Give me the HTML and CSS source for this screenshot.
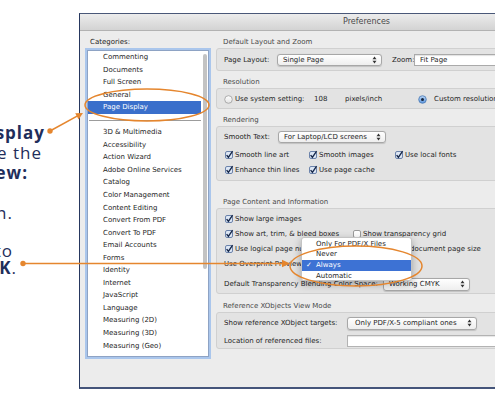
FILE: index.html
```
<!DOCTYPE html>
<html>
<head>
<meta charset="utf-8">
<title>Preferences</title>
<link rel="stylesheet" href="styles.css">
</head>
<body>
<div class="stage">
  <div class="notes">
    <div class="nl l1"><b>Page Display</b></div>
    <div class="nl l2">change the</div>
    <div class="nl l3"><b>Preview:</b></div>
    <div class="nl l4">section.</div>
    <div class="nl l5">to</div>
    <div class="nl l6"><b>CMYK</b>.</div>
  </div>

  <div class="window">
    <div class="titlebar">Preferences</div>
    <div class="content">
      <div class="left">
        <div class="cat-label">Categories:</div>
        <div class="list">
          <div class="items">
            <div class="item">Commenting</div>
            <div class="item">Documents</div>
            <div class="item">Full Screen</div>
            <div class="item">General</div>
            <div class="item on">Page Display</div>
            <div class="sep"><i></i></div>
            <div class="item">3D &amp; Multimedia</div>
            <div class="item">Accessibility</div>
            <div class="item">Action Wizard</div>
            <div class="item">Adobe Online Services</div>
            <div class="item">Catalog</div>
            <div class="item">Color Management</div>
            <div class="item">Content Editing</div>
            <div class="item">Convert From PDF</div>
            <div class="item">Convert To PDF</div>
            <div class="item">Email Accounts</div>
            <div class="item">Forms</div>
            <div class="item">Identity</div>
            <div class="item">Internet</div>
            <div class="item">JavaScript</div>
            <div class="item">Language</div>
            <div class="item">Measuring (2D)</div>
            <div class="item">Measuring (3D)</div>
            <div class="item">Measuring (Geo)</div>
          </div>
          <div class="track"><div class="thumb"></div></div>
        </div>
      </div>

      <div class="right">
        <div class="sec-label">Default Layout and Zoom</div>
        <div class="group g1">
          <div class="row r13">
            <span class="cell w53">Page Layout:</span>
            <span class="popup w105"><span>Single Page</span><svg class="arr" width="5" height="8" viewBox="0 0 5 8"><polygon points="0.5,3.2 2.5,0.6 4.5,3.2"/><polygon points="0.5,4.8 2.5,7.4 4.5,4.8"/></svg></span>
            <span class="cell zoomlbl">Zoom:</span>
            <span class="combo">Fit Page</span>
          </div>
        </div>

        <div class="sec-label mt6">Resolution</div>
        <div class="group g2">
          <div class="row r12">
            <svg class="radio" width="9" height="9" viewBox="0 0 9 9"><defs><linearGradient id="rg" x1="0" y1="0" x2="0" y2="1"><stop offset="0" stop-color="#ffffff"/><stop offset="1" stop-color="#e4e4e4"/></linearGradient></defs><circle cx="4.5" cy="4.5" r="3.8" fill="url(#rg)" stroke="#9a9a9a" stroke-width="0.8"/></svg>
            <span class="cell w79">Use system setting:</span>
            <span class="cell w31">108</span>
            <span class="cell w73">pixels/inch</span>
            <svg class="radio" width="9" height="9" viewBox="0 0 9 9"><defs><linearGradient id="rb" x1="0" y1="0" x2="0" y2="1"><stop offset="0" stop-color="#b9d4f4"/><stop offset="1" stop-color="#5d97de"/></linearGradient></defs><circle cx="4.5" cy="4.5" r="3.8" fill="url(#rb)" stroke="#4a78b4" stroke-width="0.8"/><circle cx="4.5" cy="4.5" r="1.5" fill="#16243c"/></svg>
            <span class="cell gap5">Custom resolution</span>
          </div>
        </div>

        <div class="sec-label mt6">Rendering</div>
        <div class="group g3">
          <div class="row r12">
            <span class="cell w54">Smooth Text:</span>
            <span class="popup w108"><span>For Laptop/LCD screens</span><svg class="arr" width="5" height="8" viewBox="0 0 5 8"><polygon points="0.5,3.2 2.5,0.6 4.5,3.2"/><polygon points="0.5,4.8 2.5,7.4 4.5,4.8"/></svg></span>
          </div>
          <div class="row r15 mt45">
            <span class="check c84"><svg class="cb" width="8" height="8" viewBox="0 0 8 8"><rect x="0.5" y="0.5" width="7" height="7" rx="1.5" fill="#dde7f5" stroke="#6c83ab"/><path d="M1.6 4.1 L3.4 6.3 L7.6 0.2" fill="none" stroke="#17284a" stroke-width="1.4"/></svg>Smooth line art</span>
            <span class="check c86"><svg class="cb" width="8" height="8" viewBox="0 0 8 8"><rect x="0.5" y="0.5" width="7" height="7" rx="1.5" fill="#dde7f5" stroke="#6c83ab"/><path d="M1.6 4.1 L3.4 6.3 L7.6 0.2" fill="none" stroke="#17284a" stroke-width="1.4"/></svg>Smooth images</span>
            <span class="check"><svg class="cb" width="8" height="8" viewBox="0 0 8 8"><rect x="0.5" y="0.5" width="7" height="7" rx="1.5" fill="#dde7f5" stroke="#6c83ab"/><path d="M1.6 4.1 L3.4 6.3 L7.6 0.2" fill="none" stroke="#17284a" stroke-width="1.4"/></svg>Use local fonts</span>
          </div>
          <div class="row r15">
            <span class="check c84"><svg class="cb" width="8" height="8" viewBox="0 0 8 8"><rect x="0.5" y="0.5" width="7" height="7" rx="1.5" fill="#dde7f5" stroke="#6c83ab"/><path d="M1.6 4.1 L3.4 6.3 L7.6 0.2" fill="none" stroke="#17284a" stroke-width="1.4"/></svg>Enhance thin lines</span>
            <span class="check c86"><svg class="cb" width="8" height="8" viewBox="0 0 8 8"><rect x="0.5" y="0.5" width="7" height="7" rx="1.5" fill="#dde7f5" stroke="#6c83ab"/><path d="M1.6 4.1 L3.4 6.3 L7.6 0.2" fill="none" stroke="#17284a" stroke-width="1.4"/></svg>Use page cache</span>
          </div>
        </div>

        <div class="sec-label mt16">Page Content and Information</div>
        <div class="group g4">
          <div class="row r15">
            <span class="check"><svg class="cb" width="8" height="8" viewBox="0 0 8 8"><rect x="0.5" y="0.5" width="7" height="7" rx="1.5" fill="#dde7f5" stroke="#6c83ab"/><path d="M1.6 4.1 L3.4 6.3 L7.6 0.2" fill="none" stroke="#17284a" stroke-width="1.4"/></svg>Show large images</span>
          </div>
          <div class="row r15">
            <span class="check c128"><svg class="cb" width="8" height="8" viewBox="0 0 8 8"><rect x="0.5" y="0.5" width="7" height="7" rx="1.5" fill="#dde7f5" stroke="#6c83ab"/><path d="M1.6 4.1 L3.4 6.3 L7.6 0.2" fill="none" stroke="#17284a" stroke-width="1.4"/></svg>Show art, trim, &amp; bleed boxes</span>
            <span class="check"><svg class="cb" width="8" height="8" viewBox="0 0 8 8"><rect x="0.5" y="0.5" width="7" height="7" rx="1.5" fill="#ffffff" stroke="#9b9b9b"/></svg>Show transparency grid</span>
          </div>
          <div class="row r15">
            <span class="check c128"><svg class="cb" width="8" height="8" viewBox="0 0 8 8"><rect x="0.5" y="0.5" width="7" height="7" rx="1.5" fill="#dde7f5" stroke="#6c83ab"/><path d="M1.6 4.1 L3.4 6.3 L7.6 0.2" fill="none" stroke="#17284a" stroke-width="1.4"/></svg>Use logical page numbers</span>
            <span class="check"><svg class="cb" width="8" height="8" viewBox="0 0 8 8"><rect x="0.5" y="0.5" width="7" height="7" rx="1.5" fill="#ffffff" stroke="#9b9b9b"/></svg>Always show document page size</span>
          </div>
          <div class="row r15">
            <span class="cell w79">Use Overprint Preview:</span>
            <span class="popup w100"><span>Always</span><svg class="arr" width="5" height="8" viewBox="0 0 5 8"><polygon points="0.5,3.2 2.5,0.6 4.5,3.2"/><polygon points="0.5,4.8 2.5,7.4 4.5,4.8"/></svg></span>
          </div>
          <div class="row r15 mt5">
            <span class="cell w159">Default Transparency Blending Color Space:</span>
            <span class="popup w87 h13"><span>Working CMYK</span><svg class="arr" width="5" height="8" viewBox="0 0 5 8"><polygon points="0.5,3.2 2.5,0.6 4.5,3.2"/><polygon points="0.5,4.8 2.5,7.4 4.5,4.8"/></svg></span>
          </div>
        </div>

        <div class="sec-label mt7">Reference XObjects View Mode</div>
        <div class="group g5">
          <div class="row r15">
            <span class="cell w123">Show reference XObject targets:</span>
            <span class="popup w130 h13 pl7"><span>Only PDF/X-5 compliant ones</span><svg class="arr" width="5" height="8" viewBox="0 0 5 8"><polygon points="0.5,3.2 2.5,0.6 4.5,3.2"/><polygon points="0.5,4.8 2.5,7.4 4.5,4.8"/></svg></span>
          </div>
          <div class="row r15 mt3">
            <span class="cell w123">Location of referenced files:</span>
            <span class="field"></span>
          </div>
        </div>
      </div>
    </div>

    <div class="menu">
      <div class="mi"><span class="mark"></span>Only For PDF/X Files</div>
      <div class="mi"><span class="mark"></span>Never</div>
      <div class="mi hi"><span class="mark">✓</span>Always</div>
      <div class="mi"><span class="mark"></span>Automatic</div>
    </div>
  </div>
</div>

<svg class="marks" width="495" height="400" viewBox="0 0 495 400">
  <g fill="none" stroke="#e5862e" stroke-width="1.5">
    <ellipse cx="147" cy="105" rx="62" ry="16"/>
    <ellipse cx="356" cy="266" rx="66" ry="20"/>
    <line x1="50" y1="131" x2="78" y2="115.7"/>
    <line x1="23" y1="263.5" x2="283" y2="263.5"/>
  </g>
  <g fill="#e5862e">
    <circle cx="50" cy="131" r="2.7"/>
    <polygon points="83,113 78.6,119.5 75.2,113.3"/>
    <circle cx="23" cy="263.5" r="2.7"/>
    <polygon points="290,263.5 282,259.8 282,267.2"/>
  </g>
</svg>
</body>
</html>
```

FILE: styles.css
```
* { box-sizing: border-box; margin: 0; padding: 0; }
html, body { width: 495px; height: 400px; overflow: hidden; background: #ffffff; }
body { position: relative; font-family: "DejaVu Sans", sans-serif; font-size: 7px; color: #1e1e1e; }

.stage { display: flex; padding-top: 13px; height: 400px; }

/* left annotation text */
.notes { width: 79px; flex-shrink: 0; padding-top: 110px; font-family: "Open Sans", sans-serif; font-size: 17px; letter-spacing: 1px; color: #1f2e5b; }
.nl { display: flex; justify-content: flex-end; overflow: hidden; white-space: nowrap; height: 20px; line-height: 20px; }
.nl b { font-weight: 700; }
.l1 { padding-right: 34px; }
.l2 { padding-right: 37px; }
.l3 { padding-right: 51px; }
.l4 { padding-right: 66px; margin-top: 20px; }
.l5 { padding-right: 66px; margin-top: 18.5px; height: 17px; line-height: 17px; }
.l6 { padding-right: 62px; height: 17px; line-height: 17px; }

/* window */
.window { width: 600px; height: 376px; flex-shrink: 0; position: relative; background: #ececec;
  border-top: 1px solid #4a5878; border-left: 1px solid #26375e; border-bottom: 2px solid #44547a;
  display: flex; flex-direction: column; }
.titlebar { height: 17px; flex-shrink: 0; background: linear-gradient(#ececec, #d3d3d3); border-bottom: 1px solid #b2b2b2;
  text-align: center; font-size: 8px; line-height: 16px; color: #4a4a4a; padding-right: 26px; }
.content { display: flex; flex: 1; }

/* categories */
.left { width: 134px; flex-shrink: 0; padding-top: 6px; }
.cat-label { height: 10px; line-height: 10px; padding-left: 10px; }
.list { margin: 3px 0 0 7px; width: 122px; height: 307px; background: #ffffff; border: 1px solid #8ea3c4;
  box-shadow: 0 0 0 2px #aac6ec; display: flex; }
.items { flex: 1; }
.item { height: 12.55px; line-height: 12.55px; padding-left: 15px; white-space: nowrap; }
.item.on { background: #3a6fcb; color: #ffffff; }
.sep { height: 12.55px; display: flex; align-items: center; padding-left: 1px; }
.sep i { flex: 1; height: 1px; background: #9c9c9c; }
.track { width: 7px; padding: 3px 1px 0 2px; }
.thumb { width: 4px; height: 215px; background: #c3c3c3; border-radius: 2px; }

/* right pane */
.right { flex: 1; padding: 6px 0 0 2px; }
.sec-label { height: 10px; line-height: 10px; padding-left: 7px; color: #4a4a4a; }
.mt6 { margin-top: 6px; }
.mt7 { margin-top: 7px; }
.mt16 { margin-top: 16px; }
.group { margin-top: 1px; background: #e3e3e3; border: 1px solid #d0d0d0; border-radius: 3px; padding-left: 7px; }
.g1 { height: 23px; padding-top: 4px; }
.g2 { height: 21px; padding-top: 4px; }
.g3 { height: 55px; padding-top: 4px; }
.g4 { height: 86px; padding-top: 2.5px; }
.g5 { height: 37px; padding-top: 2.5px; }

.row { display: flex; align-items: center; white-space: nowrap; }
.r12 { height: 12px; }
.r13 { height: 13px; }
.r15 { height: 15px; }
.mt45 { margin-top: 4.5px; }
.mt5 { margin-top: 5px; }
.mt3 { margin-top: 3px; }

.cell { display: block; flex-shrink: 0; }
.w31 { width: 31px; }
.w53 { width: 53px; }
.w54 { width: 54px; }
.w73 { width: 73px; }
.w79 { width: 79px; }
.w123 { width: 123px; }
.w159 { width: 159px; }
.zoomlbl { margin-left: 10px; width: 22px; }
.gap5 { margin-left: 5px; }

.radio { flex-shrink: 0; margin-right: 2px; }

.popup { height: 12px; flex-shrink: 0; display: flex; align-items: center; justify-content: space-between; padding: 0 4px 0 5px;
  border: 1px solid #a7a7a7; border-radius: 3px; background: linear-gradient(#ffffff, #eeeeee); box-shadow: 0 0.5px 1px rgba(0,0,0,0.15); }
.popup .arr { fill: #333333; }
.w87 { width: 87px; }
.w100 { width: 100px; }
.w105 { width: 105px; }
.w108 { width: 108px; }
.w130 { width: 130px; }
.h13 { height: 13px; }
.pl7 { padding-left: 7px; }

.combo { width: 150px; height: 12px; flex-shrink: 0; line-height: 10px; padding-left: 5px; background: #ffffff;
  border: 1px solid #aaaaaa; box-shadow: inset 0 1px 1px rgba(0,0,0,0.12); }
.field { width: 200px; height: 12px; flex-shrink: 0; background: #ffffff; border: 1px solid #b3b3b3; box-shadow: inset 0 1px 1px rgba(0,0,0,0.1); }

.check { display: flex; align-items: center; gap: 2px; flex-shrink: 0; }
.row > .check:first-child { margin-left: 1px; }
.cb { flex-shrink: 0; overflow: visible; }
.c84 { width: 84px; }
.c86 { width: 86px; }
.c128 { width: 128px; }

/* popup menu */
.menu { position: absolute; left: 221px; top: 223px; width: 111px; height: 44px; padding-top: 0.6px; background: #ffffff;
  border: 1px solid #c4c4c4; border-radius: 3px; box-shadow: 0 3px 8px rgba(0,0,0,0.3); color: #1e1e1e; }
.mi { height: 10.7px; line-height: 10.7px; display: flex; white-space: nowrap; }
.mi.hi { background: #3d72d4; color: #ffffff; }
.mark { width: 14px; text-align: center; flex-shrink: 0; }

/* annotation overlay */
.marks { position: absolute; left: 0; top: 0; pointer-events: none; }
```
